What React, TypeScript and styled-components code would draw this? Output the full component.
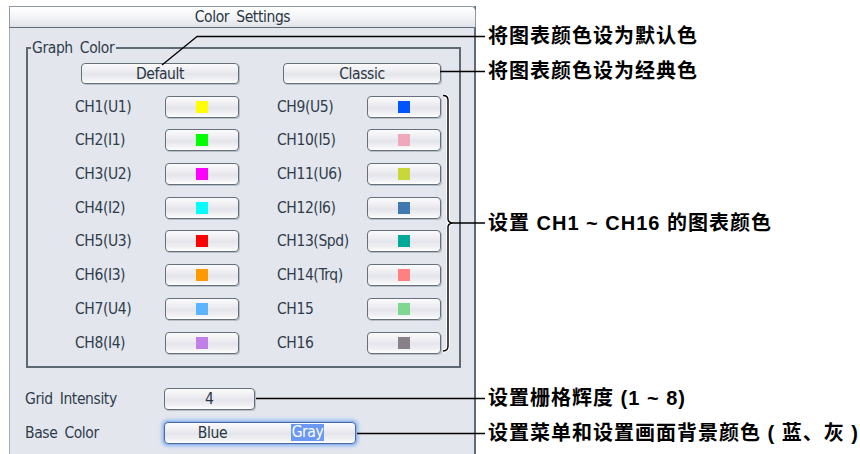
import styled, { createGlobalStyle } from "styled-components";

const GlobalStyle = createGlobalStyle`
  html, body {
    margin: 0;
    padding: 0;
    background: #ffffff;
  }
`;

type Channel = { name: string; color: string };

const leftChannels: Channel[] = [
  { name: "CH1(U1)", color: "#ffff00" },
  { name: "CH2(I1)", color: "#00ff00" },
  { name: "CH3(U2)", color: "#ff00ff" },
  { name: "CH4(I2)", color: "#00ffff" },
  { name: "CH5(U3)", color: "#ff0000" },
  { name: "CH6(I3)", color: "#ff9900" },
  { name: "CH7(U4)", color: "#5ab4ff" },
  { name: "CH8(I4)", color: "#c080e8" },
];

const rightChannels: Channel[] = [
  { name: "CH9(U5)", color: "#0055ff" },
  { name: "CH10(I5)", color: "#f0a8bc" },
  { name: "CH11(U6)", color: "#c8d838" },
  { name: "CH12(I6)", color: "#4078b0" },
  { name: "CH13(Spd)", color: "#00a898" },
  { name: "CH14(Trq)", color: "#ff8080" },
  { name: "CH15", color: "#80d890" },
  { name: "CH16", color: "#888088" },
];

const callouts = [
  { top: 36, text: "将图表颜色设为默认色" },
  { top: 71, text: "将图表颜色设为经典色" },
  { top: 223, text: "设置 CH1 ~ CH16 的图表颜色" },
  { top: 398, text: "设置栅格辉度 (1 ~ 8)" },
  { top: 433, text: "设置菜单和设置画面背景颜色 ( 蓝、灰 )" },
];

export default function App() {
  return (
    <Page>
      <GlobalStyle />
      <Panel>
        <TitleBar>Color Settings</TitleBar>
        <GroupBox>
          <Legend>Graph Color</Legend>
          <ChannelGrid>
            <PresetButton>Default</PresetButton>
            <PresetButton>Classic</PresetButton>
            {leftChannels.map((ch, i) => (
              <ChannelPair key={ch.name}>
                <ChannelCell>
                  <Label>{ch.name}</Label>
                  <ColorButton>
                    <Swatch color={ch.color} />
                  </ColorButton>
                </ChannelCell>
                <ChannelCell>
                  <Label>{rightChannels[i].name}</Label>
                  <ColorButton>
                    <Swatch color={rightChannels[i].color} />
                  </ColorButton>
                </ChannelCell>
              </ChannelPair>
            ))}
          </ChannelGrid>
        </GroupBox>
        <SettingRow $first>
          <SettingLabel>Grid Intensity</SettingLabel>
          <ValueButton>4</ValueButton>
        </SettingRow>
        <SettingRow>
          <SettingLabel>Base Color</SettingLabel>
          <ToggleButton>
            <ToggleOption>
              <span>Blue</span>
            </ToggleOption>
            <ToggleOption>
              <Selected>Gray</Selected>
            </ToggleOption>
          </ToggleButton>
        </SettingRow>
      </Panel>

      <Leaders viewBox="0 0 860 454" width="860" height="454">
        <g fill="none" strokeLinejoin="round">
          <path
            d="M443 95.5 Q448 95.5 448 100 L448 219 Q448 222 452 223 Q448 224 448 227 L448 346 Q448 351 443 351"
            stroke="#ffffff"
            strokeWidth="3.5"
          />
          <path
            d="M443 95.5 Q448 95.5 448 100 L448 219 Q448 222 452 223 Q448 224 448 227 L448 346 Q448 351 443 351"
            stroke="#000000"
            strokeWidth="1.4"
          />
          <polyline points="162,65 197,36.5 485,36.5" stroke="#000" strokeWidth="1.3" />
          <line x1="440" y1="71.5" x2="485" y2="71.5" stroke="#000" strokeWidth="1.3" />
          <line x1="452" y1="223" x2="485" y2="223" stroke="#000" strokeWidth="1.3" />
          <line x1="256" y1="398.5" x2="485" y2="398.5" stroke="#000" strokeWidth="1.3" />
          <line x1="357" y1="433.5" x2="485" y2="433.5" stroke="#000" strokeWidth="1.3" />
        </g>
      </Leaders>

      {callouts.map((c) => (
        <Callout key={c.text} $top={c.top}>
          {c.text}
        </Callout>
      ))}
    </Page>
  );
}

const uiFont = `"DejaVu Sans Condensed", "Liberation Sans Narrow", "DejaVu Sans", sans-serif`;

const Page = styled.div`
  position: relative;
  width: 860px;
  height: 454px;
  overflow: hidden;
  background: #ffffff;
  padding-top: 6px;
  box-sizing: border-box;
`;

const Panel = styled.div`
  margin-left: 9px;
  width: 467px;
  height: 460px;
  box-sizing: border-box;
  background: #e4e6ee;
  border-left: 1px solid #a4acb8;
  border-right: 2px solid #5f6b77;
  font-family: ${uiFont};
  font-stretch: condensed;
  color: #2f3d4a;
`;

const TitleBar = styled.div`
  height: 22px;
  box-sizing: border-box;
  margin-left: -1px;
  margin-right: -2px;
  border: 1px solid #8f99a5;
  border-bottom: 1px solid #5f6b77;
  border-top-right-radius: 5px;
  background: linear-gradient(#ffffff 0%, #f2f3f6 55%, #e0e2e9 100%);
  text-align: center;
  font-size: 15.5px;
  letter-spacing: -0.4px;
  line-height: 20px;
  color: #2a3642;
  word-spacing: 3px;
`;

const GroupBox = styled.fieldset`
  margin: 11px 13px 0 16px;
  padding: 6px 0 12px 0;
  border: 2px solid #5f6973;
  min-inline-size: 0;
`;

const Legend = styled.legend`
  padding: 0 2px 0 1px;
  margin-left: 3px;
  font-size: 15.5px;
  letter-spacing: -0.4px;
  line-height: 18px;
  color: #2f3d4a;
  word-spacing: 3px;
`;

const ChannelGrid = styled.div`
  display: grid;
  grid-template-columns: 164px 164px;
  column-gap: 38px;
  row-gap: 11.7px;
  padding-left: 47px;
`;

const ChannelPair = styled.div`
  display: contents;
`;

const buttonSurface = `
  box-sizing: border-box;
  border: 1px solid #66707a;
  border-radius: 4px;
  background: linear-gradient(#fbfbfd 0%, #f0f0f4 30%, #e4e5eb 55%, #f3f3f6 85%, #ffffff 100%);
  box-shadow: 1px 1px 0 #b8bec6;
`;

const PresetButton = styled.div`
  ${buttonSurface}
  justify-self: end;
  width: 158px;
  height: 21px;
  display: flex;
  align-items: center;
  justify-content: center;
  font-size: 15.5px;
  letter-spacing: -0.4px;
  color: #2a3642;
`;

const ChannelCell = styled.div`
  display: flex;
  align-items: center;
`;

const Label = styled.div`
  width: 90px;
  font-size: 15.5px;
  letter-spacing: -0.4px;
  line-height: 22px;
  white-space: nowrap;
`;

const ColorButton = styled.div`
  ${buttonSurface}
  width: 74px;
  height: 22px;
  display: flex;
  align-items: center;
  justify-content: center;
`;

const Swatch = styled.div<{ color: string }>`
  width: 12px;
  height: 12px;
  background: ${({ color }) => color};
`;

const SettingRow = styled.div<{ $first?: boolean }>`
  display: flex;
  align-items: center;
  margin-top: ${({ $first }) => ($first ? "20px" : "12px")};
  padding-left: 15px;
`;

const SettingLabel = styled.div`
  width: 139px;
  font-size: 15.5px;
  letter-spacing: -0.4px;
  line-height: 22px;
  word-spacing: 3px;
`;

const ValueButton = styled.div`
  ${buttonSurface}
  width: 91px;
  height: 22px;
  display: flex;
  align-items: center;
  justify-content: center;
  font-size: 15.5px;
  color: #2a3642;
`;

const ToggleButton = styled.div`
  ${buttonSurface}
  width: 192px;
  height: 22px;
  display: flex;
  align-items: center;
  border-color: #4a6aa0;
  box-shadow: 0 0 0 1px #8fb4ee, 0 0 3px 3px #a9c6f2;
  font-size: 15.5px;
  letter-spacing: -0.4px;
  color: #2a3642;
`;

const ToggleOption = styled.div`
  flex: 1;
  display: flex;
  justify-content: center;
`;

const Selected = styled.span`
  background: #6a98f2;
  color: #ffffff;
  padding: 0 1px;
  line-height: 17px;
`;

const Leaders = styled.svg`
  position: absolute;
  left: 0;
  top: 0;
  pointer-events: none;
`;

const Callout = styled.div<{ $top: number }>`
  position: absolute;
  left: 488px;
  top: ${({ $top }) => $top - 13}px;
  height: 26px;
  line-height: 26px;
  white-space: nowrap;
  font-family: "Liberation Sans", "Noto Sans CJK SC", sans-serif;
  font-weight: 700;
  font-size: 20px;
  letter-spacing: 1px;
  color: #000000;
`;
